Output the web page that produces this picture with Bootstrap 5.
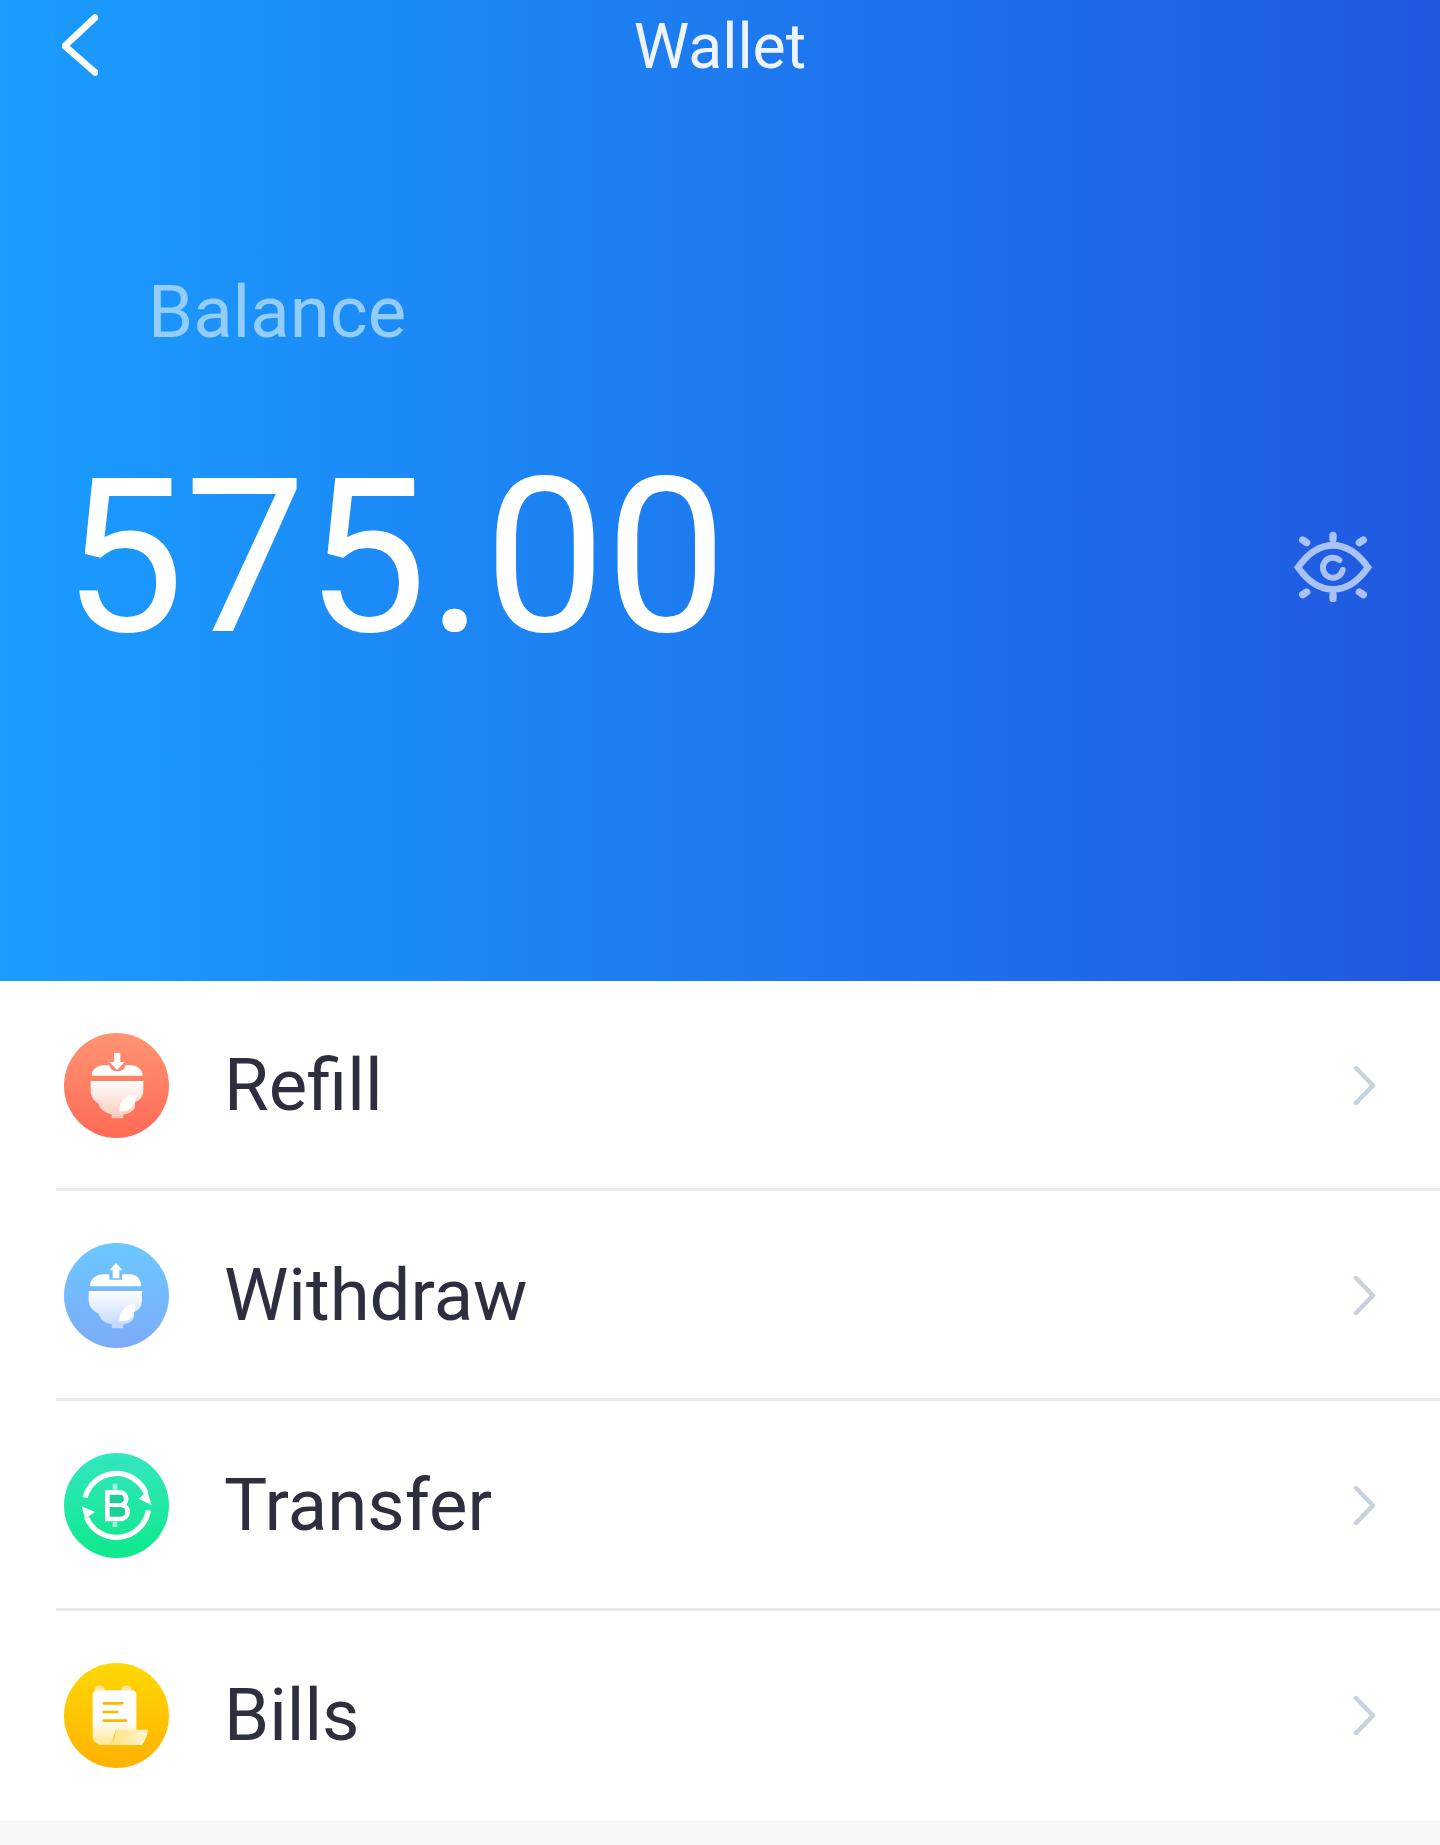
<!DOCTYPE html>
<html lang="en">
<head>
    <meta charset="UTF-8">
    <meta name="viewport" content="width=device-width, initial-scale=1.0">
    <title>Wallet</title>
    <link rel="stylesheet" href="https://cdn.jsdelivr.net/npm/bootstrap@5.3.0/dist/css/bootstrap.min.css">
    <style>
        body { background: #f5f7fa; font-family: Roboto, "Liberation Sans", sans-serif; }
        .wallet-top { height: 981px; background: linear-gradient(90deg, #1a9dff 0%, #2058e0 100%); color: #fff; }
        .top-bar { height: 94px; padding: 0 98px 0 62px; }
        .back-btn { width: 36px; margin-top: -4px; }
        .top-title { font-size: 62.5px; line-height: 94px; color: #eef3ff; flex-grow: 1; text-align: center; }
        .balance-label { font-size: 72.5px; line-height: 82px; color: #93cdfd; padding: 178px 0 0 148px; }
        .balance-row { padding: 104px 67px 0 63px; }
        .balance-num { font-size: 216px; line-height: 200px; }
        .eye-btn { margin-top: 15px; }
        .list-wrap { background: #fff; padding-bottom: 3px; }
        .wallet-row { height: 207px; padding: 2px 64px 0 64px; }
        .row-line { border-bottom: 3px solid #e8e9ee; margin-left: 56px; }
        .row-line .wallet-row { margin-left: -56px; }
        .row-name { font-size: 72.5px; color: #2d2f3e; margin-left: 55px; padding-top: 2px; }
    </style>
</head>
<body>
    <div class="wallet-top">
        <div class="top-bar d-flex align-items-center">
            <svg class="back-btn" width="36" height="66" viewBox="60 10 38 68" fill="none" stroke="#fff" stroke-width="7" stroke-linecap="round" stroke-linejoin="round"><path d="M95 15 63 45 95 73"/></svg>
            <span class="top-title">Wallet</span>
        </div>
        <div class="balance-label">Balance</div>
        <div class="balance-row d-flex justify-content-between align-items-center">
            <div class="balance-num">575.00</div>
            <svg class="eye-btn" width="80" height="72" viewBox="72 60 230 216" fill="none" stroke="#a9c3f7" stroke-linecap="round">
                <path d="M82 172C120 118 155 106 187 106S254 118 292 172C254 226 219 238 187 238S120 226 82 172Z" stroke-width="20"/>
                <path d="M206 150A30 30 0 1 0 216 180" stroke-width="18"/>
                <path d="M187 76V88M187 254V266M96 90 108 98M278 90 266 98M96 254 108 246M278 254 266 246" stroke-width="22"/>
            </svg>
        </div>
    </div>

    <div class="list-wrap">
        <div class="row-line"><div class="wallet-row d-flex align-items-center">
            <svg width="105" height="105" viewBox="72 68 315 315">
                <defs>
                    <linearGradient id="redBg" x1="0" y1="0" x2="0" y2="1"><stop offset="0" stop-color="#ff9473"/><stop offset="1" stop-color="#ff6a55"/></linearGradient>
                    <linearGradient id="redFill" x1="0" y1="0" x2="0" y2="1"><stop offset="0" stop-color="#fff"/><stop offset="1" stop-color="#ffc8b9"/></linearGradient>
                </defs>
                <circle cx="229.500" cy="225.500" r="157.500" fill="url(#redBg)"/>
                <path d="M155 196C155 178 172 165 190 165H208C210 176 218 183 232 183S254 176 256 165H272C292 165 308 178 308 196Z" fill="#fff"/>
                <path d="M222 128H241V155H254L231.500 179 208 155H222Z" fill="#fff"/>
                <path d="M152 212H310V240C310 262 296 272 285 275V290C280 305 262 312 250 312V324H215V312C195 308 178 295 176 280 160 272 152 258 152 240Z" fill="url(#redFill)"/>
                <path d="M238 302C238 272 258 252 286 250 292 282 270 308 238 302Z" fill="#fff"/>
            </svg>
            <span class="row-name">Refill</span>
            <svg class="ms-auto" width="23" height="39" viewBox="0 0 23 39" fill="none" stroke="#c9d1da" stroke-width="4.5" stroke-linecap="round" stroke-linejoin="round"><path d="M3 2 20 19.500 3 37"/></svg>
        </div></div>
        <div class="row-line"><div class="wallet-row d-flex align-items-center">
            <svg width="105" height="105" viewBox="72 68 315 315">
                <defs>
                    <linearGradient id="blueBg" x1="0" y1="0" x2="0" y2="1"><stop offset="0" stop-color="#6bc8ff"/><stop offset="1" stop-color="#7cabf8"/></linearGradient>
                    <linearGradient id="blueFill" x1="0" y1="0" x2="0" y2="1"><stop offset="0" stop-color="#fff"/><stop offset="1" stop-color="#bed6fb"/></linearGradient>
                </defs>
                <circle cx="229.500" cy="225.500" r="157.500" fill="url(#blueBg)"/>
                <path d="M150 198C150 178 168 162 188 162H208V178H246V162H270C290 162 304 178 304 198Z" fill="#fff"/>
                <path d="M218 174V150H208L228 128 248 150H238V174Z" fill="#fff"/>
                <path d="M146 212H306V240C306 262 292 272 282 275V290C277 305 260 312 250 312V324H215V312C195 308 178 295 176 280 158 272 146 258 146 240Z" fill="url(#blueFill)"/>
                <path d="M238 302C238 272 258 252 284 250 290 282 270 308 238 302Z" fill="#fff"/>
            </svg>
            <span class="row-name">Withdraw</span>
            <svg class="ms-auto" width="23" height="39" viewBox="0 0 23 39" fill="none" stroke="#c9d1da" stroke-width="4.5" stroke-linecap="round" stroke-linejoin="round"><path d="M3 2 20 19.500 3 37"/></svg>
        </div></div>
        <div class="row-line"><div class="wallet-row d-flex align-items-center">
            <svg width="105" height="105" viewBox="72 68 315 315">
                <defs>
                    <linearGradient id="greenBg" x1="0" y1="0" x2="0" y2="1"><stop offset="0" stop-color="#33e6c0"/><stop offset="1" stop-color="#0ee98a"/></linearGradient>
                </defs>
                <circle cx="229.500" cy="225.500" r="157.500" fill="url(#greenBg)"/>
                <path d="M135 202A97 97 0 0 1 318 188" fill="none" stroke="#fff" stroke-width="16"/>
                <path d="M322 183 335 225 296 205Z" fill="#fff"/>
                <path d="M325 240A97 97 0 0 1 140 262" fill="none" stroke="#fff" stroke-width="16"/>
                <path d="M125 228 165 245 135 265Z" fill="#fff"/>
                <path d="M218 160H232V178H218ZM218 274H232V290H218Z" fill="#a5f5d8"/>
                <path d="M202 186H240C264 186 264 222 244 224 270 226 270 266 240 266H202Z" fill="#1dcf96" stroke="#fff" stroke-width="14"/>
                <path d="M202 224H246" stroke="#fff" stroke-width="12"/>
            </svg>
            <span class="row-name">Transfer</span>
            <svg class="ms-auto" width="23" height="39" viewBox="0 0 23 39" fill="none" stroke="#c9d1da" stroke-width="4.5" stroke-linecap="round" stroke-linejoin="round"><path d="M3 2 20 19.500 3 37"/></svg>
        </div></div>
        <div class="wallet-row d-flex align-items-center">
            <svg width="105" height="105" viewBox="72 68 315 315">
                <defs>
                    <linearGradient id="yellowBg" x1="0" y1="0" x2="0" y2="1"><stop offset="0" stop-color="#ffd805"/><stop offset="1" stop-color="#ffb200"/></linearGradient>
                    <linearGradient id="paperFill" x1="0" y1="0" x2="0" y2="1"><stop offset="0" stop-color="#fff"/><stop offset="0.55" stop-color="#fff"/><stop offset="1" stop-color="#ffe68f"/></linearGradient>
                    <linearGradient id="curlFill" x1="0" y1="0" x2="1" y2="0"><stop offset="0" stop-color="#ffe07a"/><stop offset="1" stop-color="#fff6cf"/></linearGradient>
                </defs>
                <circle cx="229.500" cy="225.500" r="157.500" fill="url(#yellowBg)"/>
                <rect x="164" y="136" width="30" height="24" rx="12" fill="#ffe99a"/>
                <rect x="244" y="136" width="30" height="24" rx="12" fill="#ffe99a"/>
                <path d="M172 150H276C284 150 289 155 289 163V270H228C222 280 220 298 212 314H188C170 314 158 302 158 286V164C158 155 164 150 172 150Z" fill="url(#paperFill)"/>
                <path d="M228 268H324C322 286 316 300 306 314H206C220 304 226 286 228 268Z" fill="url(#curlFill)"/>
                <path d="M191 189H247M191 215H232M191 241H258" stroke="#ffb800" stroke-width="8" stroke-linecap="round"/>
            </svg>
            <span class="row-name">Bills</span>
            <svg class="ms-auto" width="23" height="39" viewBox="0 0 23 39" fill="none" stroke="#c9d1da" stroke-width="4.5" stroke-linecap="round" stroke-linejoin="round"><path d="M3 2 20 19.500 3 37"/></svg>
        </div>
    </div>
</body>
</html>
